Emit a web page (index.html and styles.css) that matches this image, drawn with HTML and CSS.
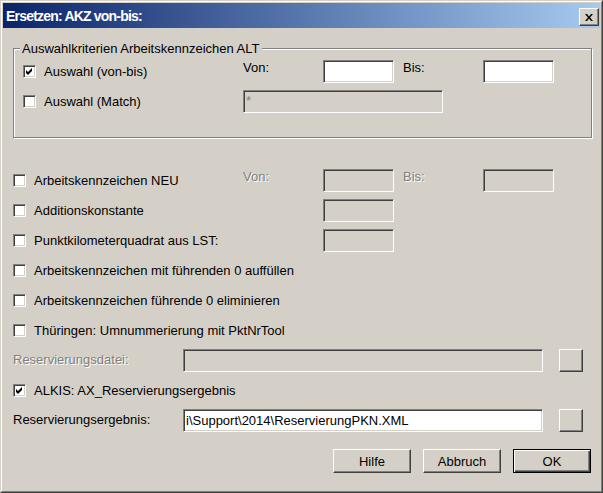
FILE: index.html
```html
<!DOCTYPE html>
<html lang="de">
<head>
<meta charset="utf-8">
<title>Ersetzen: AKZ von-bis:</title>
<link rel="stylesheet" href="styles.css">
</head>
<body>
<div class="window">
  <div class="frame">
    <div class="titlebar">
      <span class="title">Ersetzen: AKZ von-bis:</span>
      <button class="close" type="button" aria-label="Schließen">
        <svg width="8" height="7" viewBox="0 0 8 7"><path d="M0 0h2l2 2.4L6 0h2L5 3.5 8 7H6L4 4.6 2 7H0l3-3.5z" fill="#000"/></svg>
      </button>
    </div>
    <div class="content">
      <fieldset class="group">
        <legend>Auswahlkriterien Arbeitskennzeichen ALT</legend>
        <div class="group-inner">
          <div class="row">
            <label class="check cell-g">
              <span class="box"><svg width="7" height="7" viewBox="0 0 7 7"><path d="M0 2L2 4L6 0V3L2 7L0 5Z" fill="#000"/></svg></span>
              <span>Auswahl (von-bis)</span>
            </label>
            <span class="lbl">Von:</span>
            <span class="edit w71"></span>
            <span class="lbl bis">Bis:</span>
            <span class="edit w71"></span>
          </div>
          <div class="row">
            <label class="check cell-g">
              <span class="box"></span>
              <span>Auswahl (Match)</span>
            </label>
            <span class="edit disabled w200 top">*</span>
          </div>
        </div>
      </fieldset>

      <div class="rows">
        <div class="row">
          <label class="check cell-l"><span class="box"></span><span>Arbeitskennzeichen NEU</span></label>
          <span class="lbl dis">Von:</span>
          <span class="edit disabled w71"></span>
          <span class="lbl bis dis">Bis:</span>
          <span class="edit disabled w71"></span>
        </div>
        <div class="row">
          <label class="check cell-l"><span class="box"></span><span>Additionskonstante</span></label>
          <span class="spacer"></span>
          <span class="edit disabled w71"></span>
        </div>
        <div class="row">
          <label class="check cell-l"><span class="box"></span><span>Punktkilometerquadrat aus LST:</span></label>
          <span class="spacer"></span>
          <span class="edit disabled w71"></span>
        </div>
        <div class="row">
          <label class="check"><span class="box"></span><span>Arbeitskennzeichen mit führenden 0 auffüllen</span></label>
        </div>
        <div class="row">
          <label class="check"><span class="box"></span><span>Arbeitskennzeichen führende 0 eliminieren</span></label>
        </div>
        <div class="row">
          <label class="check"><span class="box"></span><span>Thüringen: Umnummerierung mit PktNrTool</span></label>
        </div>
        <div class="row">
          <span class="flabel dis">Reservierungsdatei:</span>
          <span class="edit disabled w360"></span>
          <button class="btn small" type="button"></button>
        </div>
        <div class="row">
          <label class="check">
            <span class="box"><svg width="7" height="7" viewBox="0 0 7 7"><path d="M0 2L2 4L6 0V3L2 7L0 5Z" fill="#000"/></svg></span>
            <span>ALKIS: AX_Reservierungsergebnis</span>
          </label>
        </div>
        <div class="row">
          <span class="flabel">Reservierungsergebnis:</span>
          <span class="edit w360 text">i\Support\2014\ReservierungPKN.XML</span>
          <button class="btn small" type="button"></button>
        </div>
      </div>

      <div class="buttons">
        <button class="btn push" type="button">Hilfe</button>
        <button class="btn push" type="button">Abbruch</button>
        <button class="btn push default" type="button">OK</button>
      </div>
    </div>
  </div>
</div>
</body>
</html>
```

FILE: styles.css
```css
* { box-sizing: border-box; }

html, body {
  margin: 0;
  padding: 0;
}

body {
  width: 603px;
  height: 493px;
  overflow: hidden;
  background: #d4d0c8;
  font-family: "Liberation Sans", Arial, sans-serif;
  font-size: 13px;
  line-height: 15px;
  color: #000;
}

.window {
  width: 603px;
  height: 493px;
  border: 1px solid;
  border-color: #d4d0c8 #404040 #404040 #d4d0c8;
  background: #d4d0c8;
}

.frame {
  height: 100%;
  border: 1px solid;
  border-color: #fff #808080 #808080 #fff;
  padding: 1px;
}

.titlebar {
  height: 25px;
  display: flex;
  align-items: center;
  padding-left: 3px;
  background: linear-gradient(to right, #0a246a, #a6caf0);
}

.title {
  color: #fff;
  font-weight: bold;
  font-size: 14px;
  letter-spacing: -0.8px;
  margin-top: 1px;
}

.close {
  margin-left: auto;
  margin-right: 1px;
  align-self: flex-start;
  margin-top: 5px;
  width: 20px;
  height: 18px;
  padding: 0;
  display: flex;
  align-items: center;
  justify-content: center;
  background: #d4d0c8;
  border: 1px solid;
  border-color: #fff #404040 #404040 #fff;
  box-shadow: inset -1px -1px 0 #808080;
}

.content {
  padding: 13px 0 0 10px;
}

.group {
  margin: 0;
  padding: 4px 0 24px 0;
  width: 579px;
  border: 1px solid #808080;
  box-shadow: inset 1px 1px 0 #fff, 1px 1px 0 #fff;
}

.group legend {
  margin-left: 6px;
  padding: 0 2px;
  background: #d4d0c8;
  line-height: 15px;
}

.group-inner {
  padding-left: 9px;
  display: flex;
  flex-direction: column;
  gap: 7px;
}

.rows {
  margin-top: 31px;
  display: flex;
  flex-direction: column;
  gap: 7px;
}

.row {
  display: flex;
  height: 23px;
}

.check {
  display: flex;
  align-items: center;
  gap: 8px;
  white-space: nowrap;
}

.cell-g { width: 220px; }
.cell-l { width: 230px; }

.box {
  width: 13px;
  height: 13px;
  flex: none;
  display: flex;
  align-items: center;
  justify-content: center;
  background: #fff;
  border: 1px solid;
  border-color: #808080 #fff #fff #808080;
  box-shadow: inset 1px 1px 0 #404040, inset -1px -1px 0 #d4d0c8;
}

.lbl {
  width: 80px;
  flex: none;
}

.lbl.bis { margin-left: 9px; }

.spacer { width: 80px; flex: none; }

.dis {
  color: #808080;
  text-shadow: 1px 1px 0 #fff;
}

.flabel {
  width: 170px;
  flex: none;
  align-self: center;
  margin-top: -2px;
}

.edit {
  height: 23px;
  flex: none;
  display: flex;
  align-items: center;
  padding: 0 1px 0 2px;
  background: #fff;
  border: 1px solid;
  border-color: #808080 #fff #fff #808080;
  box-shadow: inset 1px 1px 0 #404040, inset -1px -1px 0 #d4d0c8;
  white-space: nowrap;
  overflow: hidden;
}

.edit.disabled {
  background: #d4d0c8;
  color: #808080;
}

.edit.top {
  align-items: flex-start;
  padding-top: 2px;
}

.w71 { width: 71px; }
.w200 { width: 200px; }
.w360 { width: 360px; }

.btn {
  background: #d4d0c8;
  border: 1px solid;
  border-color: #fff #404040 #404040 #fff;
  box-shadow: inset -1px -1px 0 #808080;
  font-family: "Liberation Sans", Arial, sans-serif;
  font-size: 13px;
  color: #000;
  padding: 0;
}

.btn.small {
  width: 24px;
  height: 23px;
  margin-left: 16px;
}

.buttons {
  margin-top: 17px;
  padding-left: 320px;
  display: flex;
  gap: 12px;
}

.btn.push {
  width: 78px;
  height: 24px;
}

.btn.default {
  border-color: #000;
  box-shadow: inset 1px 1px 0 #fff, inset -1px -1px 0 #404040, inset -2px -2px 0 #808080;
}
```
